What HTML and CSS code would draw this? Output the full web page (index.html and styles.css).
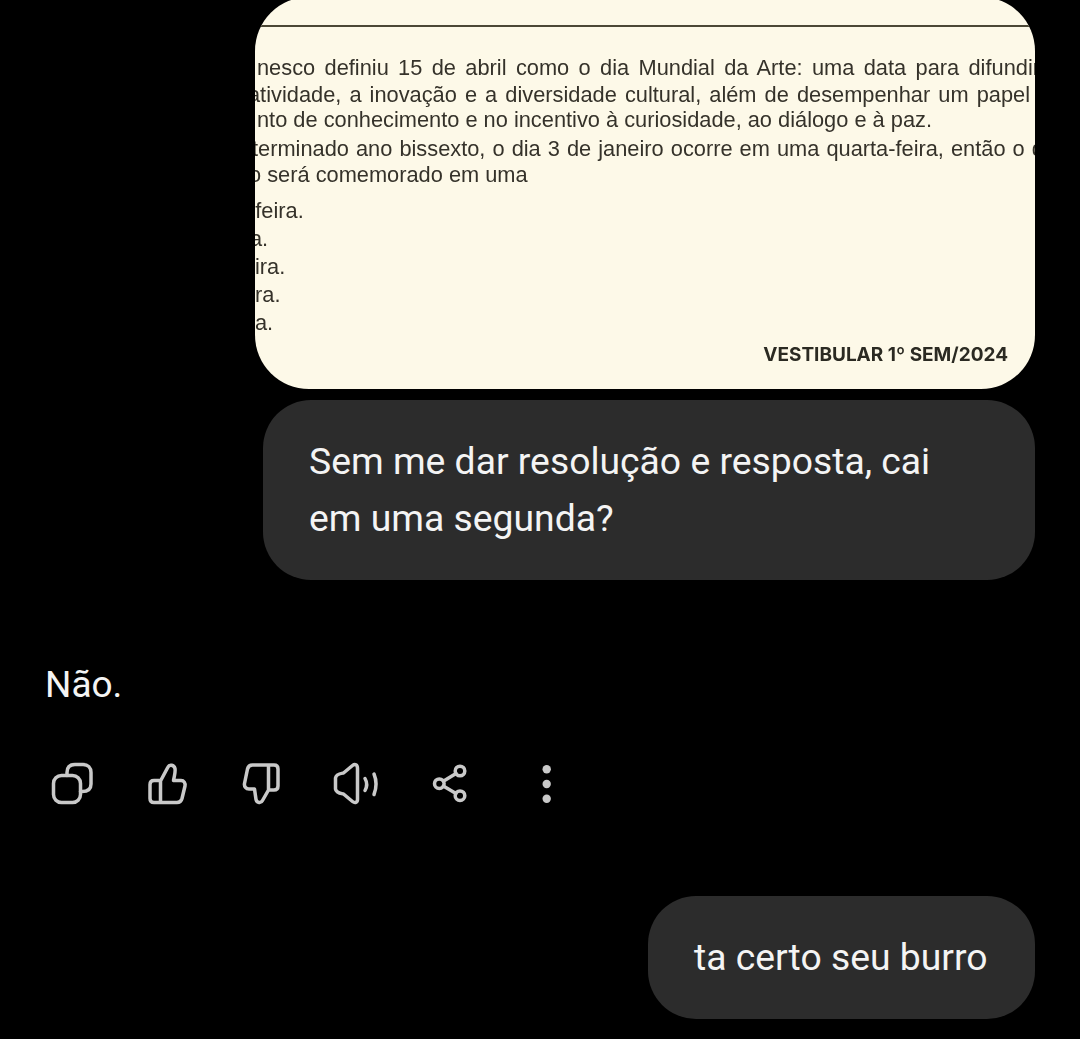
FILE: index.html
```html
<!DOCTYPE html>
<html>
<head>
  <title>Conversa</title>
  <meta name="viewport" content="width=device-width, initial-scale=1.0">
  <link rel="stylesheet" href="styles.css">
</head>
<body>
  <div class="chat">
    <div class="doc-card">
      <div class="doc-rule"></div>
      <div class="doc-text">
        <div class="line l1 fill-wide">nesco definiu 15 de abril como o dia Mundial da Arte: uma data para difundir</div>
        <div class="line l2 fill-mid cut-a">atividade, a inovação e a diversidade cultural, além de desempenhar um papel</div>
        <div class="line l3">nto de conhecimento e no incentivo à curiosidade, ao diálogo e à paz.</div>
        <div class="line l4 cut-t">terminado ano bissexto, o dia 3 de janeiro ocorre em uma quarta-feira, então o dia</div>
        <div class="line l5 cut-o">o será comemorado em uma</div>
        <div class="line opt-first cut-dash">-feira.</div>
        <div class="line opt cut-first">a.</div>
        <div class="line opt cut-i">ira.</div>
        <div class="line opt cut-r">ra.</div>
        <div class="line opt cut-r">a.</div>
      </div>
      <div class="doc-footer">VESTIBULAR 1º SEM/2024</div>
    </div>

    <div class="bubble bubble-question">Sem me dar resolução e resposta, cai<br>em uma segunda?</div>

    <div class="answer">Não.</div>

    <div class="actions">
      <svg class="icon" viewBox="0 0 48 48">
        <rect x="5.500" y="14.500" width="27" height="27" rx="8"/>
        <path d="M19 14.500V11.500C19 6.500 21.500 3.500 27 3.500H35C40 3.500 43 6.500 43 11.500V23C43 28 40 30.500 34 30.500H32.500"/>
      </svg>
      <svg class="icon" viewBox="0 0 48 48">
        <path d="M17.500 20L25 6C26.500 3 31 4 32 7.500C32.600 10 31.500 15 30.500 19.500H38C41 19.500 42.500 22 42 25L39 37.500C38.200 40.500 36.500 41.500 34 41.500H11C8.500 41.500 7 40 7 37.500V23.500C7 21 8.500 19.500 11 19.500H17.500V41.500"/>
      </svg>
      <svg class="icon" viewBox="0 0 48 48">
        <path d="M30.500 29L24.500 39.500C23 42.500 19 42 18 38.500L16.500 28H11C8 28 6 25.500 6.500 22.500L9.500 8C10.200 5 12 4 14.500 4H36C38.500 4 40 5.500 40 8V25C40 27.500 38.500 29 36 29H30.500V4"/>
      </svg>
      <svg class="icon" viewBox="0 0 48 48">
        <path d="M24.500 7.500V38.500C24.500 41.500 22 42.500 19.500 40.500L10.500 33C8 32.500 3 32 2.500 28V17C3 13 8 12.500 10.500 12L19.500 4.500C22 2.500 24.500 3.500 24.500 7.500Z"/>
        <path d="M32 17.500C34 21 34 26 32 29.500"/>
        <path d="M41 13C43.500 19 43.500 27 41 33.500"/>
      </svg>
      <svg class="icon" viewBox="0 0 48 48">
        <circle cx="32" cy="10" r="4.800"/>
        <circle cx="11.300" cy="22.700" r="4.800"/>
        <circle cx="32" cy="34.700" r="4.800"/>
        <path d="M28 12.500L15.300 20.200M15.300 25L28 32.400"/>
      </svg>
      <svg class="icon icon-solid" viewBox="0 0 48 48">
        <circle cx="23.700" cy="8.300" r="4.200"/>
        <circle cx="23.700" cy="23" r="4.200"/>
        <circle cx="23.700" cy="37.700" r="4.200"/>
      </svg>
    </div>

    <div class="bubble bubble-reply">ta certo seu burro</div>
  </div>
</body>
</html>
```

FILE: styles.css
```css
body {
  margin: 0;
  background-color: #000;
  color: #f4f4f4;
  font-family: Roboto, "Liberation Sans", sans-serif;
  height: 1039px;
  overflow: hidden;
}

.chat {
  display: flex;
  flex-direction: column;
  padding-right: 45px;
}

.doc-card {
  align-self: flex-end;
  width: 780px;
  height: 392px;
  margin-top: -3px;
  display: flex;
  flex-direction: column;
  overflow: hidden;
  border-radius: 54px;
  background-color: #fdf9e8;
  color: #35322a;
}

.doc-rule {
  height: 2px;
  margin-top: 28px;
  background-color: #4c4836;
  flex-shrink: 0;
}

.doc-text {
  font-family: "Liberation Sans", Arial, sans-serif;
  font-size: 21.8px;
  line-height: 26px;
  padding-top: 28px;
  filter: blur(0.4px);
}

.line {
  white-space: nowrap;
  margin-left: 2px;
}

.fill-wide,
.fill-mid {
  text-align: justify;
  text-align-last: justify;
}

.fill-wide {
  width: 783px;
}

.fill-mid {
  width: 782px;
}

.l2 { margin-top: 1px; }
.l3 { margin-top: -1px; }
.l4 {
  margin-top: 3px;
  word-spacing: 1px;
}
.l5 { margin-top: 0; }

.opt-first { margin-top: 10px; }
.opt { margin-top: 2px; }

.cut-a { margin-left: -7px; }
.cut-t { margin-left: -3px; }
.cut-o { margin-left: -6px; }
.cut-dash { margin-left: -7px; }
.cut-first { margin-left: -5px; }
.cut-i { margin-left: 0; }
.cut-r { margin-left: 0; }

.doc-footer {
  margin-top: auto;
  padding: 0 27px 23px 0;
  text-align: right;
  font-family: Inter, Roboto, sans-serif;
  font-size: 19px;
  line-height: 22px;
  font-weight: 700;
  color: #2b2a22;
  filter: blur(0.4px);
}

.bubble {
  align-self: flex-end;
  box-sizing: border-box;
  padding: 33px 46px;
  border-radius: 48px;
  background-color: #2c2c2c;
  font-size: 37.3px;
  line-height: 57px;
  white-space: nowrap;
}

.bubble-question {
  width: 772px;
  margin-top: 11px;
}

.bubble-reply {
  width: 387px;
  margin-top: 87px;
}

.answer {
  margin: 76px 0 0 45px;
  font-size: 37px;
  line-height: 57px;
}

.actions {
  display: flex;
  gap: 47px;
  margin: 48px 0 0 48px;
}

.icon {
  width: 48px;
  height: 48px;
  fill: none;
  stroke: #c9c9c9;
  stroke-width: 3.500;
  stroke-linecap: round;
  stroke-linejoin: round;
}

.icon-solid {
  fill: #c9c9c9;
  stroke: none;
}
```
